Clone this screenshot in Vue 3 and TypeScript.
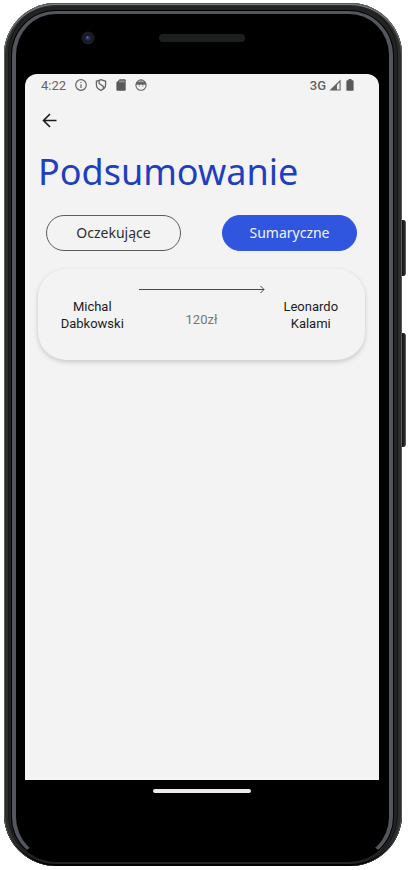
<script setup lang="ts">
import { ref } from 'vue'

interface Transfer {
  from: string[]
  to: string[]
  amount: string
}

const tabs: string[] = ['Oczekujące', 'Sumaryczne']
const active = ref<string>('Sumaryczne')
const transfers: Transfer[] = [
  { from: ['Michal', 'Dabkowski'], to: ['Leonardo', 'Kalami'], amount: '120zł' },
]
</script>

<template>
  <div class="page">
    <div class="phone">
      <span class="side-key power"></span>
      <span class="side-key volume"></span>
      <div class="bezel">
        <div class="top">
          <svg class="camera" width="14" height="14" viewBox="0 0 14 14" aria-hidden="true">
            <circle cx="7" cy="7" r="6.5" fill="#1d1d1f" />
            <circle cx="7" cy="7" r="4" fill="#15182a" />
            <circle cx="7" cy="7" r="2.6" fill="#26315f" />
            <circle cx="6.5" cy="6.5" r="1" fill="#5871b0" />
          </svg>
          <span class="speaker"></span>
        </div>
        <main class="screen">
          <div class="status">
            <span class="time">4:22</span>
            <svg width="12" height="12" viewBox="0 0 12 12" aria-hidden="true">
              <circle cx="6" cy="6" r="5.3" fill="none" stroke="#646464" stroke-width="1.2" />
              <path d="M6 5.2V9M6 2.9V4.1" stroke="#646464" stroke-width="1.2" />
            </svg>
            <svg width="12" height="12" viewBox="0 0 12 12" aria-hidden="true">
              <path d="M6 .7L10.6 2.3V5.6C10.6 8.4 8.7 10.5 6 11.4C3.3 10.5 1.4 8.4 1.4 5.6V2.3Z" fill="none" stroke="#646464" stroke-width="1.3" />
              <path d="M4.1 1.6V4.5L8.3 7.4V10" fill="none" stroke="#646464" stroke-width="1.3" />
            </svg>
            <svg width="12" height="12" viewBox="0 0 12 12" aria-hidden="true">
              <path d="M4.6 .3H9.8Q10.7 .3 10.7 1.2V10.8Q10.7 11.7 9.8 11.7H2.3Q1.4 11.7 1.4 10.8V3.5Z" fill="#595959" />
              <path d="M5 1.5V3.4M6.9 1.5V3.4M8.8 1.5V3.4" stroke="#c8c8c8" stroke-width=".9" />
            </svg>
            <svg width="12" height="12" viewBox="0 0 12 12" aria-hidden="true">
              <circle cx="6" cy="6.2" r="5.1" fill="none" stroke="#646464" stroke-width="1.1" />
              <path d="M1 6.2C1.2 2.5 3 .6 6 .6S10.8 2.5 11 6.2L9 5.4L7.6 6.2L6 5.4L4.4 6.2L3 5.4Z" fill="#646464" />
              <path d="M3.2 2.2H8.8" stroke="#d8d8d8" stroke-width=".8" />
              <circle cx="4.2" cy="7" r=".6" fill="#646464" />
              <circle cx="7.8" cy="7" r=".6" fill="#646464" />
            </svg>
            <span class="network">3G</span>
            <svg width="12" height="12" viewBox="0 0 12 12" aria-hidden="true">
              <path d="M11.6 .4V11.6H.4Z" fill="#646464" />
              <path d="M8 5.9L10.5 3.2V10.5H8Z" fill="#f3f3f3" />
            </svg>
            <svg class="battery" width="8" height="12" viewBox="0 0 8 12" aria-hidden="true">
              <path d="M2.5 0H5.5V1.3H6.7Q7.6 1.3 7.6 2.2V10.9Q7.6 11.8 6.7 11.8H1.3Q.4 11.8 .4 10.9V2.2Q.4 1.3 1.3 1.3H2.5Z" fill="#595959" />
            </svg>
          </div>
          <button class="back" type="button" aria-label="Wstecz">
            <svg width="16" height="16" viewBox="0 0 16 16" aria-hidden="true">
              <path d="M14.5 7.5H1.8M8 1L1.5 7.5L8 14" fill="none" stroke="#191919" stroke-width="1.6" />
            </svg>
          </button>
          <h1>Podsumowanie</h1>
          <div class="tabs">
            <button
              v-for="tab in tabs"
              :key="tab"
              type="button"
              class="tab"
              :class="{ selected: tab === active }"
              :aria-pressed="tab === active"
              @click="active = tab"
            >{{ tab }}</button>
          </div>
          <article v-for="(item, i) in transfers" :key="i" class="card">
            <p class="person"><span v-for="word in item.from" :key="word">{{ word }}</span></p>
            <div class="flow">
              <svg width="126" height="8" viewBox="0 0 126 8" aria-hidden="true">
                <path d="M0 3.5H125M121.5 0L125 3.5L121.5 7" fill="none" stroke="#4a4a4a" stroke-width="1" />
              </svg>
              <span class="amount">{{ item.amount }}</span>
            </div>
            <p class="person"><span v-for="word in item.to" :key="word">{{ word }}</span></p>
          </article>
        </main>
        <div class="bottom"><span class="handle"></span></div>
      </div>
    </div>
  </div>
</template>

<style>
body {
  margin: 0;
  background: #fff;
}
</style>

<style scoped>
.page {
  box-sizing: border-box;
  min-height: 100vh;
  padding: 3px 8px 4px 4px;
  display: flex;
  font-family: Roboto, 'Noto Sans', sans-serif;
}
.phone {
  position: relative;
  flex: 1;
  display: flex;
  box-sizing: border-box;
  padding: 8px 9px 5px 8px;
  border-radius: 52px;
  background: #222323;
  box-shadow: inset 0 1px 0 #55575a, inset 0 2px 1px #8a8c8e, inset 1px 0 0 #555, inset -1px 0 0 #555, inset 0 -2px 0 #000, inset 4px 0 0 #2c2d2d, inset 5px 0 0 #151616, inset -4px 0 0 #2c2d2d, inset -5px 0 0 #151616;
}
.side-key {
  position: absolute;
  left: 100%;
  width: 4px;
  border-radius: 0 3px 3px 0;
  background: linear-gradient(90deg, #111, #2b2b2b 70%, #777);
}
.power {
  top: 217px;
  height: 56px;
}
.volume {
  top: 330px;
  height: 114px;
}
.bezel {
  flex: 1;
  display: flex;
  flex-direction: column;
  box-sizing: border-box;
  padding: 0 10px 0 9px;
  border: solid #54565d;
  border-width: 3px 4px;
  border-bottom-color: #000;
  border-radius: 44px;
  background: #000;
  box-shadow: 0 0 0 1px #000;
}
.top {
  display: grid;
  grid-template-columns: 1fr auto 1fr;
  align-items: center;
  height: 48px;
  padding-bottom: 12px;
}
.camera {
  margin-left: 56px;
}
.speaker {
  width: 86px;
  height: 8px;
  border-radius: 4px;
  background: #1d1f1f;
}
.screen {
  flex: 1;
  box-sizing: border-box;
  padding: 0 14px 0 13px;
  border-radius: 12px 12px 0 0;
  background: #f3f3f3;
}
.status {
  display: flex;
  align-items: center;
  gap: 8px;
  height: 22px;
  padding: 0 11px 0 3px;
  color: #646464;
}
.time {
  margin-right: 1px;
  font-size: 13px;
}
.network {
  margin-left: auto;
  margin-right: -5px;
  font-size: 13px;
  font-weight: 500;
}
.battery {
  margin-left: -3px;
}
.back {
  display: flex;
  margin: 17px 0 0 4px;
  padding: 0;
  border: 0;
  background: none;
  cursor: pointer;
}
h1 {
  margin: 18px 0 0;
  color: #1f3fbf;
  font: 400 36px/50px 'Noto Sans', sans-serif;
}
.tabs {
  display: flex;
  justify-content: space-between;
  margin: 18px 8px 0;
}
.tab {
  width: 135px;
  height: 36px;
  padding: 0;
  border: 1px solid #5a5a5a;
  border-radius: 18px;
  background: transparent;
  color: #2e2e2e;
  font: 400 14px/20px 'Noto Sans', sans-serif;
  cursor: pointer;
}
.tab.selected {
  border-color: #3056df;
  background: #3056df;
  color: #f3f3f3;
}
.card {
  display: grid;
  grid-template-columns: 1fr auto 1fr;
  box-sizing: border-box;
  min-height: 91px;
  margin-top: 18px;
  border-radius: 28px;
  background: #f3f3f3;
  box-shadow: 0 2px 5px rgba(0, 0, 0, 0.18);
}
.person {
  display: flex;
  flex-direction: column;
  margin: 29px 0 0;
  padding: 0 0 0 8px;
  color: #1c1c1c;
  font-size: 13px;
  line-height: 17px;
  text-align: center;
}
.flow + .person {
  padding: 0 8px 0 0;
}
.flow {
  display: flex;
  flex-direction: column;
  align-items: center;
  padding-top: 17px;
}
.amount {
  margin-top: 17px;
  color: #777;
  font-size: 13px;
  line-height: 17px;
}
.bottom {
  display: flex;
  justify-content: center;
  height: 69px;
  padding-top: 9px;
}
.handle {
  width: 98px;
  height: 4px;
  border-radius: 2px;
  background: #eee9eb;
}
</style>
